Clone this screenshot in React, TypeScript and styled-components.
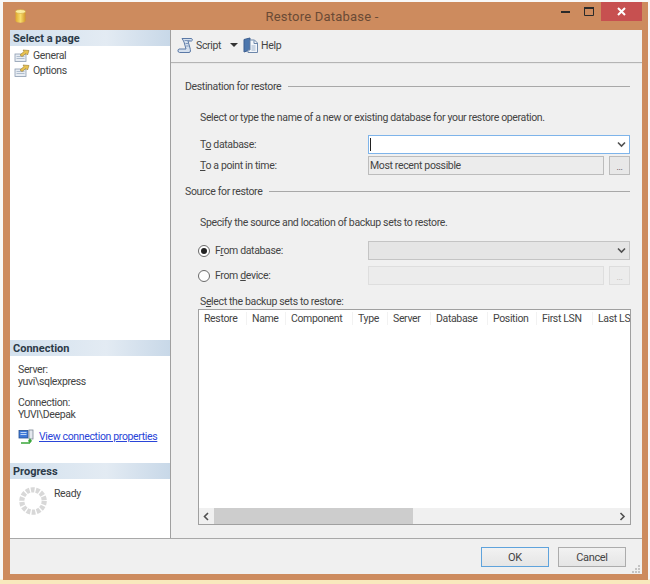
import styled, { createGlobalStyle } from 'styled-components';

const GlobalStyle = createGlobalStyle`
  html, body {
    margin: 0;
    padding: 0;
    background: #ffffff;
  }
`;

const Page = styled.div`
  width: 650px;
  height: 584px;
  box-sizing: border-box;
  padding: 2px 2px 4px 3px;
  overflow: hidden;
  background: linear-gradient(to bottom, #f8f8f8 0, #f8f8f8 579px, #f8e9bd 580px);
  font-family: Roboto, 'Liberation Sans', Arial, sans-serif;
  font-size: 10.5px;
  letter-spacing: -0.35px;
  color: #444444;
`;

const Window = styled.div`
  width: 100%;
  height: 100%;
  box-sizing: border-box;
  display: flex;
  flex-direction: column;
  background: #cd8b5e;
  padding: 0 6px 6px 7px;
`;

const TitleBar = styled.div`
  height: 28px;
  flex: none;
  display: flex;
  align-items: flex-start;
`;

const AppIcon = styled.svg`
  width: 11px;
  height: 14px;
  margin: 7px 0 0 5px;
  flex: none;
`;

const Title = styled.div`
  flex: 1;
  text-align: center;
  padding: 7px 0 0 65px;
  font-size: 13px;
  letter-spacing: 0.2px;
  color: #6a4a35;
`;

const WindowButtons = styled.div`
  display: flex;
  align-items: flex-start;
`;

const WindowButton = styled.div<{ $w: number; $close?: boolean }>`
  width: ${(p) => p.$w}px;
  height: 19px;
  display: flex;
  align-items: center;
  justify-content: center;
  background: ${(p) => (p.$close ? '#c75050' : 'transparent')};
`;

const Body = styled.div`
  flex: 1;
  min-height: 0;
  display: flex;
  flex-direction: column;
  background: #f0f0f0;
`;

const Columns = styled.div`
  flex: 1;
  min-height: 0;
  display: flex;
`;

const Sidebar = styled.aside`
  width: 160px;
  flex: none;
  display: flex;
  flex-direction: column;
  background: #ffffff;
  border-right: 1px solid #a0a0a0;
`;

const SideHeader = styled.div`
  height: 16px;
  flex: none;
  box-sizing: border-box;
  padding: 2px 0 0 3px;
  background: linear-gradient(to right, #d3e1ee, #e3ebf3 60%, #c8d8e8);
  font-size: 11px;
  font-weight: bold;
  letter-spacing: 0;
  color: #2c3a48;
  line-height: 13px;
`;

const PageList = styled.div`
  flex: 1;
  margin-top: 2px;
`;

const PageItem = styled.div`
  height: 15px;
  display: flex;
  align-items: center;
  gap: 3px;
  padding-left: 4px;
`;

const ConnectionBlock = styled.div`
  height: 107px;
  flex: none;
  box-sizing: border-box;
  padding: 8px 0 0 8px;
  line-height: 12px;
`;

const ConnectionGroup = styled.div`
  margin-bottom: 9px;
`;

const LinkRow = styled.div`
  display: flex;
  align-items: center;
  gap: 5px;
  margin: -1px 0 0;
  white-space: nowrap;
`;

const PropLink = styled.a`
  color: #2a45d8;
  text-decoration: underline;
`;

const ProgressBlock = styled.div`
  height: 59px;
  flex: none;
  box-sizing: border-box;
  display: flex;
  align-items: flex-start;
  gap: 7px;
  padding: 8px 0 0 9px;
`;

const Main = styled.main`
  flex: 1;
  min-width: 0;
  display: flex;
  flex-direction: column;
`;

const Toolbar = styled.div`
  height: 33px;
  flex: none;
  box-sizing: border-box;
  display: flex;
  align-items: center;
  padding: 0 0 2px 6px;
  background: #f0f0f0;
  border-bottom: 1px solid #b4b4b4;
`;

const ToolLabel = styled.span`
  margin-left: 2px;
`;

const ToolCaret = styled.span`
  width: 0;
  height: 0;
  margin: 0 5px 0 9px;
  border-left: 4px solid transparent;
  border-right: 4px solid transparent;
  border-top: 4px solid #333333;
`;

const Form = styled.div`
  flex: 1;
  min-height: 0;
  display: flex;
  flex-direction: column;
  padding: 15px 12px 0 14px;
  border-top: 1px solid #e8e8e8;
`;

const SectionTitle = styled.div<{ $after?: number }>`
  display: flex;
  align-items: center;
  gap: 7px;
  height: 14px;
  margin-bottom: ${(p) => p.$after ?? 0}px;
  &::after {
    content: '';
    flex: 1;
    height: 1px;
    background: #a8a8a8;
  }
`;

const Hint = styled.div<{ $after: number }>`
  height: 14px;
  margin: 0 0 ${(p) => p.$after}px 15px;
`;

const FieldRow = styled.div<{ $h: number; $after?: number }>`
  height: ${(p) => p.$h}px;
  margin-bottom: ${(p) => p.$after ?? 0}px;
  display: grid;
  grid-template-columns: 170px 1fr;
  align-items: center;
  padding-left: 15px;
`;

const RadioRow = styled(FieldRow)`
  grid-template-columns: 172px 1fr;
  padding-left: 13px;
`;

const FieldLabel = styled.span`
  white-space: nowrap;
`;

const RadioLabel = styled.span`
  display: flex;
  align-items: center;
  gap: 5px;
`;

const Radio = styled.span<{ $checked?: boolean }>`
  width: 10px;
  height: 10px;
  border-radius: 50%;
  border: 1px solid #6a6a6a;
  background: #fff;
  display: flex;
  align-items: center;
  justify-content: center;
  &::after {
    content: '';
    display: ${(p) => (p.$checked ? 'block' : 'none')};
    width: 6px;
    height: 6px;
    border-radius: 50%;
    background: #222222;
  }
`;

const Control = styled.div`
  display: flex;
  gap: 5px;
  margin-left: -2px;
`;

const comboFills = {
  focus: { bg: '#ffffff', line: '#7eb4ea' },
  readonly: { bg: '#ececec', line: '#bcbcbc' },
  disabled: { bg: '#e5e5e5', line: '#c4c4c4' },
  faint: { bg: '#ececec', line: '#dedede' },
};

const Combo = styled.div<{ $tone: keyof typeof comboFills }>`
  flex: 1;
  height: 19px;
  box-sizing: border-box;
  display: flex;
  align-items: center;
  justify-content: space-between;
  padding: 0 3px 0 1px;
  background: ${(p) => comboFills[p.$tone].bg};
  border: 1px solid ${(p) => comboFills[p.$tone].line};
`;

const Caret = styled.span`
  width: 1px;
  height: 13px;
  background: #222222;
`;

const DotsButton = styled.div<{ $disabled?: boolean }>`
  width: 21px;
  height: 19px;
  box-sizing: border-box;
  flex: none;
  display: flex;
  align-items: flex-end;
  justify-content: center;
  padding-bottom: 2px;
  font-size: 9px;
  line-height: 9px;
  color: ${(p) => (p.$disabled ? '#b8b8b8' : '#444444')};
  background: ${(p) => (p.$disabled ? '#ececec' : '#e8e8e8')};
  border: 1px solid ${(p) => (p.$disabled ? '#dddddd' : '#bcbcbc')};
`;

const GridLabel = styled.div`
  height: 14px;
  margin-left: 15px;
`;

const GridFrame = styled.div`
  width: 433px;
  height: 216px;
  flex: none;
  box-sizing: border-box;
  margin-left: 13px;
  display: flex;
  flex-direction: column;
  background: #ffffff;
  border: 1px solid #a0a0a0;
  overflow: hidden;
`;

const GridHeader = styled.div`
  height: 16px;
  flex: none;
  display: flex;
  align-items: center;
  white-space: nowrap;
`;

const GridColumn = styled.div<{ $w: number }>`
  width: ${(p) => p.$w}px;
  flex: none;
  box-sizing: border-box;
  padding-left: 5px;
  border-right: 1px solid #f2f2f2;
`;

const GridSpace = styled.div`
  flex: 1;
`;

const ScrollBar = styled.div`
  height: 16px;
  flex: none;
  display: flex;
  align-items: center;
  background: #f0f0f0;
`;

const ScrollArrow = styled.div`
  width: 15px;
  display: flex;
  justify-content: center;
`;

const ScrollThumb = styled.div`
  width: 199px;
  height: 100%;
  background: #cdcdcd;
`;

const ScrollTrack = styled.div`
  flex: 1;
`;

const Footer = styled.div`
  position: relative;
  height: 36px;
  flex: none;
  box-sizing: border-box;
  display: flex;
  align-items: flex-start;
  justify-content: flex-end;
  gap: 9px;
  padding: 8px 16px 0 0;
  border-top: 1px solid #a8a8a8;
`;

const FooterButton = styled.div<{ $default?: boolean }>`
  width: 68px;
  height: 20px;
  box-sizing: border-box;
  display: flex;
  align-items: center;
  justify-content: center;
  font-size: 11px;
  background: linear-gradient(to bottom, #f2f2f2, #e5e5e5);
  border: 1px solid ${(p) => (p.$default ? '#5fa3dc' : '#acacac')};
`;

const SizeGrip = styled.svg`
  position: absolute;
  right: 2px;
  bottom: 1px;
  width: 8px;
  height: 8px;
`;

const Chevron = ({ dir = 'down' }: { dir?: 'down' | 'left' | 'right' }) => {
  const d = dir === 'down' ? 'M1 2 L4.5 5.5 L8 2' : dir === 'left' ? 'M5 1 L1.5 4.5 L5 8' : 'M1.5 1 L5 4.5 L1.5 8';
  return (
    <svg width={dir === 'down' ? 9 : 7} height={9} viewBox={dir === 'down' ? '0 0 9 8' : '0 0 7 9'} fill="none">
      <path d={d} stroke="#505050" strokeWidth="1.6" />
    </svg>
  );
};

const DatabaseIcon = () => (
  <AppIcon viewBox="0 0 11 14">
    <defs>
      <linearGradient id="db" x1="0" x2="1" y1="0" y2="0">
        <stop offset="0" stopColor="#e0a92c" />
        <stop offset="0.5" stopColor="#f7dc6c" />
        <stop offset="1" stopColor="#d3982a" />
      </linearGradient>
    </defs>
    <path d="M.5 2.5 V11.5 C.5 14.5 10.5 14.5 10.5 11.5 V2.5 Z" fill="url(#db)" />
    <ellipse cx="5.5" cy="2.5" rx="5" ry="2" fill="#fbeea0" stroke="#c99a30" strokeWidth="0.5" />
  </AppIcon>
);

const PageIcon = () => (
  <svg width="16" height="13" viewBox="0 0 16 13">
    <rect x="1" y="5" width="11" height="7.5" fill="#e8edf3" stroke="#8c9bb0" strokeWidth="0.8" />
    <path d="M2.5 7.5h8M2.5 9.5h8" stroke="#9fb0c4" strokeWidth="0.8" />
    <path d="M6 6 L10 2.5 L9 1 L15 1.5 L13.5 6 L12 4.5 L8 7.5 Z" fill="#e8c252" stroke="#9a7a2a" strokeWidth="0.6" />
  </svg>
);

const ScriptIcon = () => (
  <svg width="17" height="17" viewBox="0 0 17 17" fill="none">
    <path
      d="M5 1.5 H14 C15.5 1.5 16 3.5 14.5 4 H11 L13 11 C13.5 13 14 15.5 12 15.5 H2.5 C.8 15.5 .3 12.5 2 12 H9 L7 5 C6.5 3.5 5.5 2.5 5 1.5 Z"
      fill="#d5e0ee"
      stroke="#5b79a6"
    />
    <path d="M7.5 3.5h5M8.5 6.5h2.5M9.2 9h2.5" stroke="#7f97ba" />
  </svg>
);

const HelpIcon = () => (
  <svg width="16" height="17" viewBox="0 0 16 17" fill="none">
    <path d="M1 2.5 L7 1 V13 L1 15 Z" fill="#4d77ad" stroke="#3c5f90" />
    <path d="M7 3 H11.5 L14.5 6 V15.5 H5 V13 H7 Z" fill="#f3f6fa" stroke="#6d87aa" />
    <path d="M11 3.5 V6.5 H14" stroke="#6d87aa" />
    <path d="M8.5 9h4M8.5 11h4M8.5 13h4" stroke="#9fb3cc" />
  </svg>
);

const ConnectionIcon = () => (
  <svg width="16" height="15" viewBox="0 0 16 15" fill="none">
    <rect x="1" y="1.5" width="9" height="7.5" fill="#3f78d8" stroke="#26508f" strokeWidth="0.8" />
    <path d="M2.5 3.5h6M2.5 5.5h6" stroke="#bcd5f5" />
    <rect x="11" y="1" width="4" height="9" fill="#e4e8ee" stroke="#7d8796" strokeWidth="0.8" />
    <path d="M3 14h9M12 14V11M10.5 12.5 12 10.5l1.5 2" stroke="#3aa63a" strokeWidth="1.4" />
  </svg>
);

const Spinner = () => (
  <svg width="28" height="28" viewBox="0 0 28 28" fill="none">
    <circle cx="14" cy="14" r="11.2" stroke="#d8d8d8" strokeWidth="5.2" strokeDasharray="3.7 1.33" />
  </svg>
);

const columns: [string, number][] = [
  ['Restore', 48],
  ['Name', 39],
  ['Component', 67],
  ['Type', 35],
  ['Server', 43],
  ['Database', 57],
  ['Position', 49],
  ['First LSN', 56],
  ['Last LSN', 60],
];

export default function App() {
  return (
    <Page>
      <GlobalStyle />
      <Window>
        <TitleBar>
          <DatabaseIcon />
          <Title>Restore Database -</Title>
          <WindowButtons>
            <WindowButton $w={24}>
              <svg width="9" height="3" viewBox="0 0 9 3">
                <rect width="9" height="2" y="1" fill="#2a2a2a" />
              </svg>
            </WindowButton>
            <WindowButton $w={24}>
              <svg width="10" height="9" viewBox="0 0 10 9" fill="none">
                <path d="M.5 1 H9.5 V8.5 H.5 Z" stroke="#2a2a2a" />
                <path d="M0 1 H10" stroke="#2a2a2a" strokeWidth="2" />
              </svg>
            </WindowButton>
            <WindowButton $w={41} $close>
              <svg width="9" height="9" viewBox="0 0 9 9">
                <path d="M1 1 L8 8 M8 1 L1 8" stroke="#ffffff" strokeWidth="2" />
              </svg>
            </WindowButton>
          </WindowButtons>
        </TitleBar>
        <Body>
          <Columns>
            <Sidebar>
              <SideHeader>Select a page</SideHeader>
              <PageList>
                <PageItem>
                  <PageIcon />
                  General
                </PageItem>
                <PageItem>
                  <PageIcon />
                  Options
                </PageItem>
              </PageList>
              <SideHeader>Connection</SideHeader>
              <ConnectionBlock>
                <ConnectionGroup>
                  Server:
                  <br />
                  yuvi\sqlexpress
                </ConnectionGroup>
                <ConnectionGroup>
                  Connection:
                  <br />
                  YUVI\Deepak
                </ConnectionGroup>
                <LinkRow>
                  <ConnectionIcon />
                  <PropLink>View connection properties</PropLink>
                </LinkRow>
              </ConnectionBlock>
              <SideHeader>Progress</SideHeader>
              <ProgressBlock>
                <Spinner />
                Ready
              </ProgressBlock>
            </Sidebar>
            <Main>
              <Toolbar>
                <ScriptIcon />
                <ToolLabel>Script</ToolLabel>
                <ToolCaret />
                <HelpIcon />
                <ToolLabel>Help</ToolLabel>
              </Toolbar>
              <Form>
                <SectionTitle $after={18}>Destination for restore</SectionTitle>
                <Hint $after={10}>Select or type the name of a new or existing database for your restore operation.</Hint>
                <FieldRow $h={19} $after={2}>
                  <FieldLabel>
                    T<u>o</u> database:
                  </FieldLabel>
                  <Control>
                    <Combo $tone="focus">
                      <Caret />
                      <Chevron />
                    </Combo>
                  </Control>
                </FieldRow>
                <FieldRow $h={19} $after={9}>
                  <FieldLabel>
                    <u>T</u>o a point in time:
                  </FieldLabel>
                  <Control>
                    <Combo $tone="readonly">Most recent possible</Combo>
                    <DotsButton>...</DotsButton>
                  </Control>
                </FieldRow>
                <SectionTitle $after={18}>Source for restore</SectionTitle>
                <Hint $after={11}>Specify the source and location of backup sets to restore.</Hint>
                <RadioRow $h={19} $after={6}>
                  <RadioLabel>
                    <Radio $checked />
                    <span>
                      F<u>r</u>om database:
                    </span>
                  </RadioLabel>
                  <Control>
                    <Combo $tone="disabled">
                      <span />
                      <Chevron />
                    </Combo>
                  </Control>
                </RadioRow>
                <RadioRow $h={19} $after={10}>
                  <RadioLabel>
                    <Radio />
                    <span>
                      From <u>d</u>evice:
                    </span>
                  </RadioLabel>
                  <Control>
                    <Combo $tone="faint" />
                    <DotsButton $disabled>...</DotsButton>
                  </Control>
                </RadioRow>
                <GridLabel>
                  S<u>e</u>lect the backup sets to restore:
                </GridLabel>
                <GridFrame>
                  <GridHeader>
                    {columns.map(([name, w]) => (
                      <GridColumn key={name} $w={w}>
                        {name}
                      </GridColumn>
                    ))}
                  </GridHeader>
                  <GridSpace />
                  <ScrollBar>
                    <ScrollArrow>
                      <Chevron dir="left" />
                    </ScrollArrow>
                    <ScrollThumb />
                    <ScrollTrack />
                    <ScrollArrow>
                      <Chevron dir="right" />
                    </ScrollArrow>
                  </ScrollBar>
                </GridFrame>
              </Form>
            </Main>
          </Columns>
          <Footer>
            <FooterButton $default>OK</FooterButton>
            <FooterButton>Cancel</FooterButton>
            <SizeGrip viewBox="0 0 8 8">
              <path d="M6 0h2v2H6zM3 3h2v2H3zM6 3h2v2H6zM0 6h2v2H0zM3 6h2v2H3zM6 6h2v2H6z" fill="#c4c4c4" />
            </SizeGrip>
          </Footer>
        </Body>
      </Window>
    </Page>
  );
}
